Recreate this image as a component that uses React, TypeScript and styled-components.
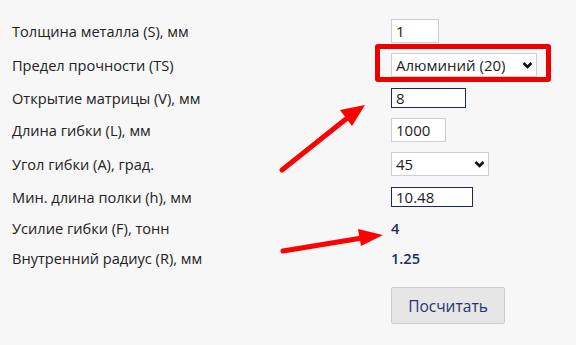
import React from "react";
import styled, { createGlobalStyle } from "styled-components";

const Global = createGlobalStyle`
  html, body { margin: 0; padding: 0; background: #f7f7f7; }
  body { font-family: "Open Sans", "Liberation Sans", sans-serif; }
`;

const Page = styled.div`
  position: relative;
  width: 576px;
  height: 345px;
  background: #f7f7f7;
  padding: 14px 0 0 12px;
  box-sizing: border-box;
  overflow: hidden;
`;

const Form = styled.div`
  display: flex;
  flex-direction: column;
`;

const Row = styled.div<{ $h: number }>`
  display: grid;
  grid-template-columns: 379px 1fr;
  align-items: center;
  height: ${(p) => p.$h}px;
`;

const Label = styled.span`
  font-size: 14.6px;
  color: #222;
  line-height: 20px;
`;

const Field = styled.input<{ $w: number; $dark?: boolean }>`
  box-sizing: border-box;
  width: ${(p) => p.$w}px;
  height: ${(p) => (p.$dark ? 20 : 24)}px;
  border: 1px solid ${(p) => (p.$dark ? "#1c2660" : "#cfcfcf")};
  background: #fff;
  font-family: "Open Sans", sans-serif;
  font-size: 15px;
  color: #222;
  padding: 0 4px;
  margin: 0;
  outline: none;
`;

const SelectWrap = styled.div<{ $w: number; $marked?: boolean }>`
  position: relative;
  width: ${(p) => p.$w}px;
  height: 24px;
  ${(p) =>
    p.$marked &&
    `&::after {
      content: "";
      position: absolute;
      top: -9px;
      left: -16px;
      right: -14px;
      bottom: -5px;
      border: 5px solid #ee0000;
      border-radius: 3px;
      pointer-events: none;
    }`}
`;

const Select = styled.select`
  appearance: none;
  -webkit-appearance: none;
  box-sizing: border-box;
  width: 100%;
  height: 24px;
  border: 1px solid #cfcfcf;
  background: #fff;
  font-family: "Open Sans", sans-serif;
  font-size: 15px;
  color: #222;
  padding: 0 4px;
  margin: 0;
  outline: none;
`;

const Chevron = styled.svg`
  position: absolute;
  right: 4px;
  top: 8px;
  width: 11px;
  height: 8px;
  pointer-events: none;
`;

const Value = styled.span`
  font-size: 14.6px;
  font-weight: 600;
  color: #1c2a6e;
`;

const ButtonRow = styled.div`
  display: grid;
  grid-template-columns: 379px 1fr;
  margin-top: 15px;
`;

const Button = styled.button`
  width: 114px;
  height: 37px;
  box-sizing: border-box;
  border: 1px solid #cdcdcd;
  border-radius: 2px;
  background: #e6e6e6;
  font-family: "Open Sans", sans-serif;
  font-size: 15.5px;
  color: #26356e;
  cursor: pointer;
  padding: 0;
`;

const Arrows = styled.svg`
  position: absolute;
  left: 0;
  top: 0;
  width: 576px;
  height: 345px;
  pointer-events: none;
`;

const ChevronIcon = () => (
  <Chevron viewBox="0 0 11 8">
    <path d="M1.5 2 L5.5 6 L9.5 2" fill="none" stroke="#111" strokeWidth="2.6" />
  </Chevron>
);

export default function App() {
  return (
    <>
      <Global />
      <Page>
        <Form>
          <Row $h={34}>
            <Label>Толщина металла (S), мм</Label>
            <Field $w={48} defaultValue="1" />
          </Row>
          <Row $h={34}>
            <Label>Предел прочности (TS)</Label>
            <SelectWrap $w={146} $marked>
              <Select defaultValue="al">
                <option value="al">Алюминий (20)</option>
              </Select>
              <ChevronIcon />
            </SelectWrap>
          </Row>
          <Row $h={32}>
            <Label>Открытие матрицы (V), мм</Label>
            <Field $w={75} $dark defaultValue="8" />
          </Row>
          <Row $h={32}>
            <Label>Длина гибки (L), мм</Label>
            <Field $w={55} defaultValue="1000" />
          </Row>
          <Row $h={36}>
            <Label>Угол гибки (A), град.</Label>
            <SelectWrap $w={98}>
              <Select defaultValue="45">
                <option value="45">45</option>
              </Select>
              <ChevronIcon />
            </SelectWrap>
          </Row>
          <Row $h={30}>
            <Label>Мин. длина полки (h), мм</Label>
            <Field $w={82} $dark defaultValue="10.48" />
          </Row>
          <Row $h={32}>
            <Label>Усилие гибки (F), тонн</Label>
            <Value>4</Value>
          </Row>
          <Row $h={28}>
            <Label>Внутренний радиус (R), мм</Label>
            <Value>1.25</Value>
          </Row>
          <ButtonRow>
            <span />
            <Button>Посчитать</Button>
          </ButtonRow>
        </Form>
        <Arrows viewBox="0 0 576 345">
          <line x1="282" y1="170" x2="346" y2="119" stroke="#f00" strokeWidth="5" strokeLinecap="round" />
          <polygon points="365,105 340,110 352,126" fill="#f00" />
          <line x1="283" y1="251" x2="362" y2="238" stroke="#f00" strokeWidth="5" strokeLinecap="round" />
          <polygon points="383,235 358,229 361,246" fill="#f00" />
        </Arrows>
      </Page>
    </>
  );
}
